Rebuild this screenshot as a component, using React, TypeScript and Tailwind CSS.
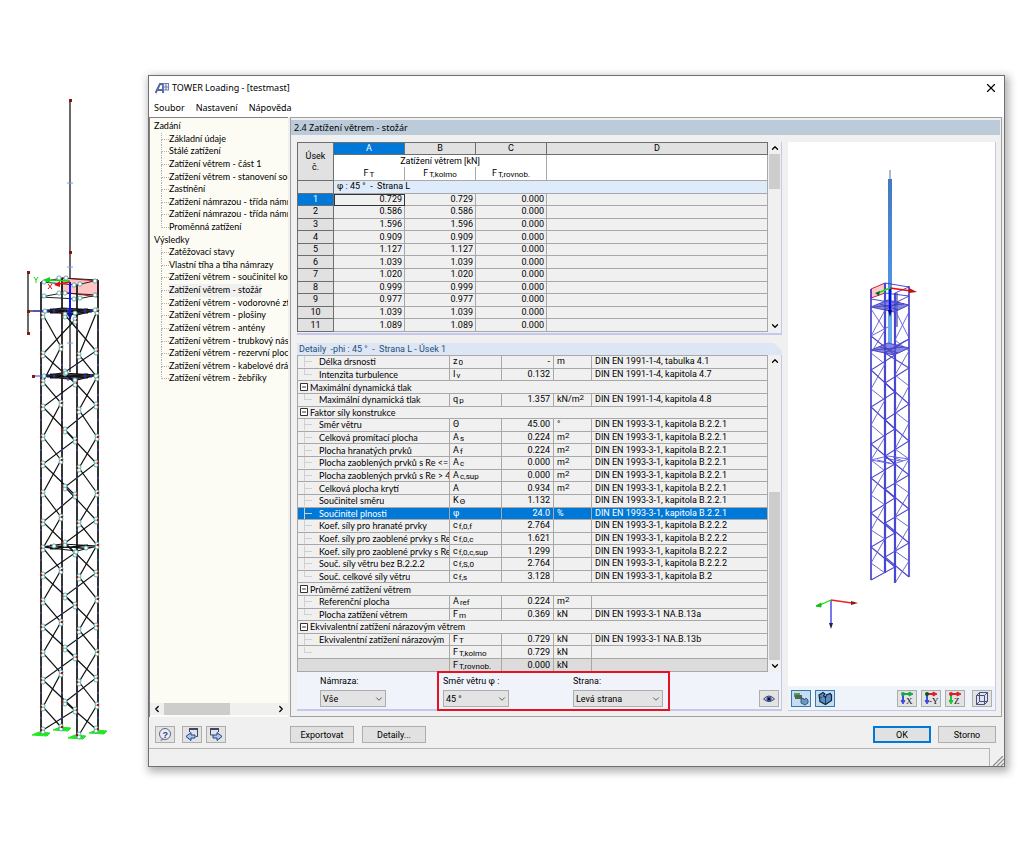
import { clsx } from 'clsx';
import { ChevronDown, ChevronLeft, ChevronRight, ChevronUp, X } from 'lucide-react';
import { ReactNode } from 'react';

type Point = [number, number];

const treeGroups = [
  {
    title: 'Zadání',
    items: [
      'Základní údaje',
      'Stálé zatížení',
      'Zatížení větrem - část 1',
      'Zatížení větrem - stanovení sou',
      'Zastínění',
      'Zatížení námrazou - třída námra',
      'Zatížení námrazou - třída námra',
      'Proměnná zatížení',
    ],
  },
  {
    title: 'Výsledky',
    items: [
      'Zatěžovací stavy',
      'Vlastní tíha a tíha námrazy',
      'Zatížení větrem - součinitel kon',
      'Zatížení větrem - stožár',
      'Zatížení větrem - vodorovné zt',
      'Zatížení větrem - plošiny',
      'Zatížení větrem - antény',
      'Zatížení větrem - trubkový nás',
      'Zatížení větrem - rezervní ploch',
      'Zatížení větrem - kabelové dráh',
      'Zatížení větrem - žebříky',
    ],
  },
];

const forces = [
  '0.729', '0.586', '1.596', '0.909', '1.127', '1.039',
  '1.020', '0.999', '0.977', '1.039', '1.089',
];

interface DetailRow {
  name: string;
  group?: boolean;
  last?: boolean;
  symbol?: string;
  sub?: string;
  value?: string;
  unit?: string;
  sup?: string;
  source?: string;
}

const EN1991 = 'DIN EN 1991-1-4, ';
const EN1993 = 'DIN EN 1993-3-1, kapitola ';

const details: DetailRow[] = [
  { name: 'Délka drsnosti', symbol: 'z', sub: '0', value: '-', unit: 'm', source: EN1991 + 'tabulka 4.1' },
  { name: 'Intenzita turbulence', symbol: 'I', sub: 'v', value: '0.132', source: EN1991 + 'kapitola 4.7', last: true },
  { name: 'Maximální dynamická tlak', group: true },
  { name: 'Maximální dynamická tlak', symbol: 'q', sub: 'p', value: '1.357', unit: 'kN/m', sup: '2', source: EN1991 + 'kapitola 4.8', last: true },
  { name: 'Faktor síly konstrukce', group: true },
  { name: 'Směr větru', symbol: 'Θ', value: '45.00', unit: '°', source: EN1993 + 'B.2.2.1' },
  { name: 'Celková promítací plocha', symbol: 'A', sub: 's', value: '0.224', unit: 'm', sup: '2', source: EN1993 + 'B.2.2.1' },
  { name: 'Plocha hranatých prvků', symbol: 'A', sub: 'f', value: '0.224', unit: 'm', sup: '2', source: EN1993 + 'B.2.2.1' },
  { name: 'Plocha zaoblených prvků s Re <=', symbol: 'A', sub: 'c', value: '0.000', unit: 'm', sup: '2', source: EN1993 + 'B.2.2.1' },
  { name: 'Plocha zaoblených prvků s Re > 4', symbol: 'A', sub: 'c,sup', value: '0.000', unit: 'm', sup: '2', source: EN1993 + 'B.2.2.1' },
  { name: 'Celková plocha krytí', symbol: 'A', value: '0.934', unit: 'm', sup: '2', source: EN1993 + 'B.2.2.1' },
  { name: 'Součinitel směru', symbol: 'K', sub: 'Θ', value: '1.132', source: EN1993 + 'B.2.2.1' },
  { name: 'Součinitel plnosti', symbol: 'φ', value: '24.0', unit: '%', source: EN1993 + 'B.2.2.1' },
  { name: 'Koef. síly pro hranaté prvky', symbol: 'c', sub: 'f,0,f', value: '2.764', source: EN1993 + 'B.2.2.2' },
  { name: 'Koef. síly pro zaoblené prvky s Re', symbol: 'c', sub: 'f,0,c', value: '1.621', source: EN1993 + 'B.2.2.2' },
  { name: 'Koef. síly pro zaoblené prvky s Re', symbol: 'c', sub: 'f,0,c,sup', value: '1.299', source: EN1993 + 'B.2.2.2' },
  { name: 'Souč. síly větru bez B.2.2.2', symbol: 'c', sub: 'f,S,0', value: '2.764', source: EN1993 + 'B.2.2.2' },
  { name: 'Souč. celkové síly větru', symbol: 'c', sub: 'f,s', value: '3.128', source: EN1993 + 'B.2', last: true },
  { name: 'Průměrné zatížení větrem', group: true },
  { name: 'Referenční plocha', symbol: 'A', sub: 'ref', value: '0.224', unit: 'm', sup: '2' },
  { name: 'Plocha zatížení větrem', symbol: 'F', sub: 'm', value: '0.369', unit: 'kN', source: 'DIN EN 1993-3-1 NA.B.13a', last: true },
  { name: 'Ekvivalentní zatížení nárazovým větrem', group: true },
  { name: 'Ekvivalentní zatížení nárazovým', symbol: 'F', sub: 'T', value: '0.729', unit: 'kN', source: 'DIN EN 1993-3-1 NA.B.13b' },
  { name: '', symbol: 'F', sub: 'T,kolmo', value: '0.729', unit: 'kN', last: true },
  { name: '', symbol: 'F', sub: 'T,rovnob.', value: '0.000', unit: 'kN' },
];

const SELECTED = 12;

// Joins the levels of two legs into one bracing line, first leg first
function zigzag(xa: number, a: number[], xb: number, b: number[]): Point[] {
  const points: Point[] = [];
  a.forEach((y, i) => {
    points.push([xa, y]);
    if (i < b.length) points.push([xb, b[i]]);
  });
  return points;
}

const toPath = (points: Point[]) => points.map((p) => p.join(',')).join(' ');

const mastBraces = [
  zigzag(75, [320, 383, 440, 495, 553, 605, 657, 710], 43, [354, 407, 464, 522, 575, 627, 680, 730]),
  zigzag(65, [315, 372, 430, 487, 543, 596, 648, 702], 96, [351, 405, 463, 520, 573, 626, 678, 729]),
  zigzag(43, [315, 382, 437, 493, 548, 601, 653, 707], 61, [347, 403, 460, 517, 570, 622, 673, 727]),
  zigzag(97, [311, 377, 437, 493, 545, 599, 652, 705], 79, [355, 410, 468, 523, 577, 630, 682, 735]),
];

const mastLegs = [
  { x: 41, top: 282, bottom: 733 },
  { x: 62, top: 278, bottom: 728 },
  { x: 77, top: 285, bottom: 736 },
  { x: 98, top: 280, bottom: 731 },
];

const mastJoints: Point[] = [
  [44, 282], [59, 278], [66, 278], [74, 285], [80, 284], [95, 281],
  [44, 296], [59, 293], [65, 293], [74, 299], [80, 298], [95, 295],
  [45, 311], [75, 313], [95, 310], [44, 376], [66, 373], [75, 380],
  [96, 376], [54, 546], [76, 552], [86, 548],
];

function MastDrawing() {
  return (
    <svg
      className="w-[148px] h-[692px] shrink-0"
      viewBox="0 75 148 692"
      role="img"
      aria-label="Model stožáru"
    >
      <path d="M70 99V372" stroke="#444" strokeWidth="1.6" />
      <path d="M28 272V333M28 311H45" stroke="#444" strokeWidth="1.6" />
      <path d="M62 278L98 281V297L62 292Z" fill="#ffc4c4" stroke="#e01010" />
      {mastLegs.map((leg) => (
        <g key={leg.x}>
          <path d={`M${leg.x} ${leg.top}V${leg.bottom}`} stroke="#111" strokeWidth="1.7" />
          <path
            d={`M${leg.x - 9} ${leg.bottom + 2}L${leg.x - 2} ${leg.bottom - 1}L${leg.x + 9} ${leg.bottom}L${leg.x + 6} ${leg.bottom + 3}Z`}
            fill="#22e822"
            stroke="#22e822"
          />
        </g>
      ))}
      <path
        d="M41 282L62 278L98 280L77 285ZM41 297L62 293L98 295L77 299Z"
        fill="none"
        stroke="#222"
      />
      {[311, 376, 547].map((y, i) => (
        <g key={y}>
          <path
            d={`M41 ${y}L62 ${y - 3}L98 ${y - 1}L77 ${y + 4}ZM46 ${y}H94M50 ${y - 2}L88 ${y + 2}M50 ${y + 2}L88 ${y - 2}`}
            fill={i < 2 ? '#445' : 'none'}
            stroke="#111"
            strokeWidth="1.2"
          />
          {i < 2 && (
            <path
              d={`M33 ${y}H44M48 ${y - 2}V${y + 2}M54 ${y - 3}V${y + 2}M68 ${y - 3}V${y + 5}M85 ${y - 3}V${y + 3}M91 ${y - 2}V${y + 2}`}
              stroke="#3838e8"
            />
          )}
        </g>
      ))}
      {mastBraces.map((brace, i) => (
        <polyline key={i} points={toPath(brace)} fill="none" stroke="#111" strokeWidth="1.2" />
      ))}
      {mastLegs.map((leg) =>
        [330, 365, 395, 420, 450, 478, 505, 530, 560, 587, 613, 640, 667, 693, 718].map((y) => (
          <path key={`${leg.x}-${y}`} d={`M${leg.x - 1} ${y}H${leg.x + 1}`} stroke="#5050ff" />
        )),
      )}
      {mastBraces.flat().map(([x, y], i) => (
        <g key={i}>
          <circle cx={x} cy={y - 1} r="2" fill="#fff" stroke="#3c9a9a" strokeWidth="0.8" />
          <circle cx={x} cy={y + 2} r="2" fill="#fff" stroke="#3c9a9a" strokeWidth="0.8" />
          <circle cx={x < 70 ? (x < 50 ? 41 : 62) : x < 85 ? 77 : 98} cy={y} r="1.2" fill="#a01010" />
        </g>
      ))}
      {mastJoints.map(([x, y]) => (
        <circle key={`${x}-${y}`} cx={x} cy={y} r="2.1" fill="#fff" stroke="#3c9a9a" strokeWidth="0.8" />
      ))}
      <path d="M70 282V319" stroke="#1010ff" strokeWidth="2" />
      <path d="M67 313H73L70 320Z" fill="#111188" />
      <path d="M70 281L46 280" stroke="#10d810" strokeWidth="1.6" />
      <path d="M50 277V283L43 280Z" fill="#10d810" />
      <path d="M70 282L58 284" stroke="#e01010" strokeWidth="1.6" />
      <path d="M60 281V287L54 285Z" fill="#e01010" />
      <path d="M34 277L36 280L38 277M36 280V283" fill="none" stroke="#10d810" />
      <path d="M48 284L52 289M52 284L48 289" stroke="#e01010" />
      <path d="M67 183H73M67 267H73M67 343H73" stroke="#6aa0ff" />
      {[[70, 100], [70, 252], [28, 272], [28, 311], [28, 333], [33, 376]].map(([x, y]) => (
        <rect key={`${x}-${y}`} x={x - 1} y={y - 1} width="3" height="3" fill="#8c1414" />
      ))}
    </svg>
  );
}

const towerBraces = [
  zigzag(871, [336, 370, 407, 444, 478, 513, 547, 580], 895, [355, 392, 429, 464, 498, 533, 567]),
  zigzag(909, [339, 368, 404, 441, 475, 509, 543, 577], 885, [353, 383, 420, 456, 489, 523, 557]),
  zigzag(885, [330, 364, 400, 437, 471, 505, 539, 573], 871, [353, 389, 425, 460, 495, 530, 563]),
  zigzag(895, [340, 375, 412, 449, 483, 517, 551, 583], 909, [351, 386, 423, 459, 493, 527, 561]),
];

function TowerView() {
  return (
    <svg
      className="w-full h-[544px] bg-white"
      viewBox="788 142 207 544"
      role="img"
      aria-label="Náhled věže"
    >
      <defs>
        <linearGradient id="pole" x1="0" y1="0" x2="0" y2="1">
          <stop offset="0" stopColor="#4479bd" />
          <stop offset="1" stopColor="#4f95ea" />
        </linearGradient>
      </defs>
      <rect x="889" y="170" width="2" height="10" fill="#a9b9d2" />
      <rect x="888" y="179" width="4" height="114" fill="url(#pole)" />
      <rect x="888" y="293" width="4" height="50" fill="#66aaf0" />
      <path d="M871 289L885 283V293L871 298Z" fill="#ffc8c8" stroke="#d02040" />
      <g fill="none" stroke="#3a36cc">
        <path d="M871 289V580M909 286V577" strokeWidth="1.6" />
        <path d="M885 283V573M895 293V583" strokeWidth="2.2" stroke="#4a46d4" />
        <path d="M885 283L909 287L895 293M871 299L895 303L909 296L885 293" strokeWidth="0.9" />
        <path d="M897 293V327" strokeWidth="1.2" stroke="#44449a" />
      </g>
      {[307, 350].map((y) => (
        <g key={y}>
          <path d={`M871 ${y}L888 ${y - 7}L909 ${y - 2}L894 ${y + 5}Z`} fill="#5c5ce0" fillOpacity="0.75" stroke="#4844c8" />
          <path d={`M874 ${y}L904 ${y - 3}M880 ${y - 3}L898 ${y + 3}M884 ${y + 3}L900 ${y - 5}`} stroke="#33338c" strokeWidth="0.7" />
        </g>
      ))}
      <path
        d="M871 309L885 330M871 336L885 310M871 336L888 327M895 310L909 338M895 340L909 312M895 346L909 339M871 460L888 456L909 459L893 464ZM877 460L890 463M884 458L900 461M893 457L903 461"
        fill="none"
        stroke="#5c58dc"
        strokeWidth="0.9"
      />
      {towerBraces.map((brace, i) => (
        <polyline
          key={i}
          points={toPath(brace)}
          fill="none"
          stroke={i < 2 ? '#4844d0' : '#5c5cc8'}
          strokeWidth={i < 2 ? 1.1 : 0.9}
        />
      ))}
      <path d="M890 288V312" stroke="#0808f0" strokeWidth="2" />
      <path d="M888 310H892L890 317Z" fill="#000080" />
      <path d="M890 288L911 291" stroke="#f00808" strokeWidth="1.6" />
      <path d="M909 288L917 292L909 293Z" fill="#c01010" />
      <path d="M890 288L878 293" stroke="#10e810" strokeWidth="1.8" />
      <path d="M880 291L875 293L879 296Z" fill="#063" />
      <path d="M831 600V624" stroke="#3030e0" strokeWidth="1.3" />
      <path d="M829 623H833L831 629Z" fill="#222244" />
      <path d="M831 600L852 603" stroke="#f02020" strokeWidth="1.3" />
      <path d="M851 601L858 603L851 605Z" fill="#802020" />
      <path d="M831 600L820 605" stroke="#10e010" strokeWidth="1.3" />
      <path d="M821 603L816 606L821 607Z" fill="#10c010" stroke="#10c010" />
    </svg>
  );
}

interface IconButtonProps {
  label: string;
  pressed?: boolean;
  children: ReactNode;
}

function IconButton({ label, pressed, children }: IconButtonProps) {
  return (
    <button
      type="button"
      aria-label={label}
      className={clsx(
        'flex items-center justify-center w-5 h-[17px] border shrink-0',
        pressed ? 'bg-[#c3ddf2] border-[#3a78b0]' : 'bg-[#e3e3e3] border-[#adadad]',
      )}
    >
      {children}
    </button>
  );
}

interface AxisIconProps {
  text: string;
  down: string;
  side: string;
}

function AxisIcon({ text, down, side }: AxisIconProps) {
  return (
    <svg className="w-4 h-[15px]" viewBox="0 0 16 15">
      <path d="M4 3V10" stroke={down} strokeWidth="2" />
      <path d="M2 9.500H6L4 13Z" fill={down} stroke={down} />
      <path d="M4 3H11" stroke={side} strokeWidth="2" />
      <path d="M10 1L14 3L10 5Z" fill={side} stroke={side} />
      <circle cx="4" cy="3" r="2" fill={text === '-Y' ? '#0a5a0a' : side} />
      <text x={text === '-Y' ? 6 : 7} y="13" fontSize="9" fontFamily="Liberation Serif, serif" fill="#111">
        {text}
      </text>
    </svg>
  );
}

function TransferIcon({ flip }: { flip?: boolean }) {
  return (
    <svg className="w-4 h-[15px]" viewBox="0 0 16 15">
      <path
        d={flip ? 'M2.500 8V2.500H10.500V5M2.500 8H5' : 'M5.500 5V2.500H13.500V9.500H12'}
        fill="none"
        stroke="#3c4668"
      />
      <path d={flip ? 'M2 2H11' : 'M5 2H14'} stroke="#3c4668" strokeWidth="2" />
      <path
        d={flip ? 'M5 8H9V5.500L14 9.500L9 13.500V11H5Z' : 'M11 8H7V5.500L2 9.500L7 13.500V11H11Z'}
        fill="#a9c6ee"
        stroke="#27408a"
      />
    </svg>
  );
}

interface SelectBoxProps {
  id: string;
  label: string;
  value: string;
  wide?: boolean;
}

function SelectBox({ id, label, value, wide }: SelectBoxProps) {
  return (
    <div className="flex flex-col gap-[3px]">
      <label htmlFor={id} className="leading-3">
        {label}
      </label>
      <div className={clsx('relative', wide ? 'w-[90px]' : 'w-[66px]')}>
        <select
          id={id}
          defaultValue={value}
          className="block w-full h-[17px] appearance-none border border-[#adadad] bg-[#e3e3e3] pl-[2px] leading-3"
        >
          <option>{value}</option>
        </select>
        <ChevronDown className="absolute right-[2px] top-[4px] size-[10px] text-[#444] pointer-events-none" />
      </div>
    </div>
  );
}

function VerticalScroll({ thumb }: { thumb: string }) {
  return (
    <div className="flex flex-col items-center w-[13px] shrink-0 bg-[#f0f0f0]">
      <ChevronUp className="size-[10px] my-px shrink-0" strokeWidth={3} />
      <div className={clsx('w-[11px] bg-[#cdcdcd]', thumb)} />
      <ChevronDown className="size-[10px] my-px shrink-0" strokeWidth={3} />
    </div>
  );
}

function Sidebar() {
  return (
    <nav className="flex flex-col w-[139px] shrink-0 bg-[#fcfcf4] border-t border-l border-[#828282] overflow-hidden font-['Lato',sans-serif]">
      <div className="flex flex-col h-[267px] pl-1 pt-[2px]">
        {treeGroups.map((group) => (
          <div key={group.title} className={clsx('flex flex-col min-h-0', group.items.length > 8 ? 'grow-[12]' : 'grow-[9]')}>
            <div className="flex-1 leading-3">{group.title}</div>
            {group.items.map((item, i) => (
              <div key={i} className="flex flex-1 leading-3 whitespace-nowrap">
                <span className="flex flex-col w-2 ml-[7px] shrink-0">
                  <span className="h-[7px] border-l border-b border-dotted border-[#b0b0b0]" />
                  {i < group.items.length - 1 && <span className="flex-1 border-l border-dotted border-[#b0b0b0]" />}
                </span>
                <a href="#" className={clsx(item.endsWith('stožár') && 'bg-[#f0f0f0]')}>
                  {item}
                </a>
              </div>
            ))}
          </div>
        ))}
      </div>
      <div className="flex items-center mt-auto mb-[2px] h-3 bg-[#f0f0f0]">
        <ChevronLeft className="size-[10px] mx-[2px] shrink-0" strokeWidth={3} />
        <div className="w-[66px] h-3 bg-[#cdcdcd]" />
        <ChevronRight className="size-[10px] ml-auto mr-[2px] shrink-0" strokeWidth={3} />
      </div>
    </nav>
  );
}

function Sub({ children }: { children: ReactNode }) {
  return <span className="relative top-px ml-px text-[8px] leading-none">{children}</span>;
}

function ForceTable() {
  const cell = 'border-r border-b border-[#a8a8a8] p-0 font-normal';
  const headBase = 'border-r border-b border-[#6e6e6e] p-0 font-normal';
  const head = clsx(headBase, 'bg-[#e1e1e1]');
  const active = clsx(headBase, 'bg-[#0078d7] text-white');
  return (
    <div className="flex border-b-2 border-r border-[#c5c8ee] pb-px">
      <div className="flex-1 min-w-0">
        <table className="w-full h-[190px] table-fixed border-separate border-spacing-0 border-t border-l border-[#6e6e6e] leading-[11px]">
          <colgroup>
            <col className="w-9" />
            <col className="w-[71px]" />
            <col className="w-[71px]" />
            <col className="w-[71px]" />
            <col />
          </colgroup>
          <thead>
            <tr className="h-[11px]">
              <th rowSpan={3} className={head}>
                Úsek
                <br />
                č.
              </th>
              <th className={active}>A</th>
              <th className={head}>B</th>
              <th className={head}>C</th>
              <th className={head}>D</th>
            </tr>
            <tr className="h-3 bg-white">
              <th colSpan={3} className="border-r border-[#a8a8a8] p-0 font-normal">
                Zatížení větrem [kN]
              </th>
              <th className="border-r border-[#a8a8a8] p-0" />
            </tr>
            <tr className="h-[14px] bg-white">
              <th className={cell}>
                F<Sub>T</Sub>
              </th>
              <th className={cell}>
                F<Sub>T,kolmo</Sub>
              </th>
              <th className={cell}>
                F<Sub>T,rovnob.</Sub>
              </th>
              <th className={cell} />
            </tr>
          </thead>
          <tbody>
            <tr className="h-3">
              <th className={head} />
              <td colSpan={4} className={clsx(cell, 'bg-[#deebfa] pl-[3px] whitespace-pre')}>
                φ : 45 °  -  Strana L
              </td>
            </tr>
            {forces.map((force, i) => (
              <tr key={i} className="h-3 text-right">
                <th scope="row" className={clsx(i === 0 ? active : head, 'text-center')}>
                  {i + 1}
                </th>
                <td className={clsx(cell, 'pr-[2px]', i === 0 && 'outline outline-1 -outline-offset-1 outline-[#333]')}>
                  {force}
                </td>
                <td className={clsx(cell, 'pr-[2px]')}>{force}</td>
                <td className={clsx(cell, 'pr-[2px]')}>0.000</td>
                <td className={cell} />
              </tr>
            ))}
          </tbody>
        </table>
      </div>
      <VerticalScroll thumb="h-[35px] mb-auto" />
    </div>
  );
}

function DetailTable() {
  const cell = 'border-r border-b border-[#a8a8a8] p-0';
  return (
    <div className="flex border-r border-[#c5c8ee]">
      <div className="flex-1 min-w-0">
        <table className="w-full h-[317px] table-fixed border-separate border-spacing-0 border-t border-l border-[#a8a8a8] leading-[11px]">
          <colgroup>
            <col className="w-[152px]" />
            <col className="w-[52px]" />
            <col className="w-[52px]" />
            <col className="w-[38px]" />
            <col />
          </colgroup>
          <tbody>
            {details.map((row, i) =>
              row.group ? (
                <tr key={i} className="h-3">
                  <th colSpan={5} className={clsx(cell, 'text-left font-normal')}>
                    <span className="flex items-center gap-[2px] h-[11px] pl-[2px] font-['Lato',sans-serif]">
                      <svg className="size-2" viewBox="0 0 8 8">
                        <path d="M0.500 0.500H7.500V7.500H0.500ZM2 4H6" fill="#fff" stroke="#333" />
                      </svg>
                      {row.name}
                    </span>
                  </th>
                </tr>
              ) : (
                <tr
                  key={i}
                  className={clsx(
                    'h-3',
                    i === SELECTED && 'bg-[#0078d7] text-white',
                    i === details.length - 1 && 'bg-[#dcdcdc]',
                  )}
                >
                  <td className={cell}>
                    <span className="flex h-[11px] pl-[6px] font-['Lato',sans-serif]">
                      <span className="flex flex-col w-[15px] shrink-0">
                        {i < details.length - 1 && <span className="h-[6px] w-2 border-l border-b border-[#d0d0d0]" />}
                        {!row.last && i < details.length - 1 && <span className="flex-1 border-l border-[#d0d0d0]" />}
                      </span>
                      <span className="overflow-hidden whitespace-nowrap">{row.name}</span>
                    </span>
                  </td>
                  <td className={clsx(cell, 'pl-[3px] whitespace-nowrap')}>
                    {row.symbol}
                    {row.sub && <Sub>{row.sub}</Sub>}
                  </td>
                  <td className={clsx(cell, 'pr-[3px] text-right')}>{row.value}</td>
                  <td className={clsx(cell, 'pl-[3px] whitespace-nowrap')}>
                    {row.unit}
                    {row.sup && <span className="relative -top-[2px] text-[8px] leading-none">{row.sup}</span>}
                  </td>
                  <td className={clsx(cell, 'pl-[3px] whitespace-nowrap')}>{row.source}</td>
                </tr>
              ),
            )}
          </tbody>
        </table>
      </div>
      <VerticalScroll thumb="h-[168px] mt-auto" />
    </div>
  );
}

function ViewToolbar() {
  return (
    <div className="flex items-center gap-1 h-6 px-[3px] bg-[#eff4fa]">
      <IconButton label="Zobrazit model" pressed>
        <svg className="w-4 h-[15px]" viewBox="0 0 16 15">
          <rect x="1" y="2" width="6" height="4" fill="#5c9c4c" />
          <rect x="2" y="4" width="7" height="4" fill="#4a6a58" />
          <path d="M8 8L10 7L11 9L13 7L15 9V12L12 14L8 12Z" fill="#6c98c8" stroke="#23405c" strokeWidth="0.8" />
        </svg>
      </IconButton>
      <IconButton label="Zobrazit plochy" pressed>
        <svg className="w-4 h-[15px]" viewBox="0 0 16 15">
          <path d="M2 4L6 1.500L8 3L6.500 5L8.500 6.500L9.500 4L13 2.500L14.500 4V9.500L8.500 13.500L3 10.500Z" fill="#5c8cc0" stroke="#102840" strokeWidth="1.2" />
          <path d="M8.500 7V13M3 6L5 7" stroke="#102840" strokeWidth="0.8" />
        </svg>
      </IconButton>
      <div className="flex gap-1 ml-auto">
        <IconButton label="Pohled X">
          <AxisIcon text="X" down="#3c50e0" side="#18a848" />
        </IconButton>
        <IconButton label="Pohled -Y">
          <AxisIcon text="-Y" down="#3c50e0" side="#d82030" />
        </IconButton>
        <IconButton label="Pohled Z">
          <AxisIcon text="Z" down="#18c838" side="#d82030" />
        </IconButton>
      </div>
      <div className="ml-[3px]">
        <IconButton label="Izometrie">
          <svg className="w-4 h-[15px]" viewBox="0 0 16 15">
            <path
              d="M2.500 4.500L5.500 1.500H13.500V10.500L10.500 13.500H2.500ZM2.500 4.500H10.500V13.500M10.500 4.500L13.500 1.500M5.500 1.500V10.500H13.500M5.500 10.500L2.500 13.500"
              fill="#dfe3f4"
              stroke="#4a5078"
            />
          </svg>
        </IconButton>
      </div>
    </div>
  );
}

function Filters() {
  return (
    <div className="relative flex items-start h-[39px] pl-[23px] pr-[2px] pt-[3px] bg-[#f0f4fa] border-b-2 border-r border-[#c5c8ee]">
      <SelectBox id="icing" label="Námraza:" value="Vše" />
      <div className="ml-[57px]">
        <SelectBox id="direction" label="Směr větru φ :" value="45 °" />
      </div>
      <div className="ml-16">
        <SelectBox id="side" label="Strana:" value="Levá strana" wide />
      </div>
      <div className="ml-auto mt-[15px]">
        <IconButton label="Zobrazit">
          <svg className="w-3 h-2" viewBox="0 0 12 8">
            <path d="M0.500 4Q6 -2 11.500 4Q6 9 0.500 4Z" fill="#c8ccd8" stroke="#445" />
            <circle cx="6" cy="4" r="2.600" fill="#2c4cb0" />
            <circle cx="6" cy="4" r="1.100" fill="#001" />
          </svg>
        </IconButton>
      </div>
      {/* highlighted selection */}
      <div className="absolute left-[140px] -top-px w-[233px] h-10 border-2 border-[#e81123] pointer-events-none" />
    </div>
  );
}

function ActionButton({ primary, children }: { primary?: boolean; children: ReactNode }) {
  return (
    <button
      type="button"
      className={clsx(
        'h-[17px] bg-[#e1e1e1] leading-3 min-w-[58px]',
        primary ? 'border-2 border-[#0078d7]' : 'border border-[#adadad]',
      )}
    >
      {children}
    </button>
  );
}

export default function App() {
  return (
    <div className="flex items-start pt-[75px] pb-[78px] pr-[19px] bg-white min-h-screen text-black font-['Roboto',sans-serif] text-[9px]">
      <MastDrawing />
      <div className="flex flex-col flex-1 min-w-0 bg-[#f0f0f0] border border-[#707070] shadow-[2px_3px_8px_2px_rgba(0,0,0,0.3)]">
        <div className="flex items-center h-[23px] pl-[6px] pr-[6px] bg-white">
          <svg className="w-[14px] h-3 mr-[3px]" viewBox="0 0 14 12">
            <path d="M0.500 11L5 2H8V11M3 8H7" fill="none" stroke="#56689c" strokeWidth="2" />
            <path d="M8.500 1.500H13.500V8H8.500ZM11 1V8M8 5H14" fill="none" stroke="#6c7cc0" strokeWidth="1.200" />
          </svg>
          <h1 className="font-['Noto_Sans',sans-serif]">TOWER Loading - [testmast]</h1>
          <button type="button" aria-label="Zavřít" className="ml-auto">
            <X className="size-[14px]" strokeWidth={2} />
          </button>
        </div>
        <div className="flex items-center gap-[11px] h-[18px] pl-[5px] bg-white font-['Noto_Sans',sans-serif]">
          <button type="button">Soubor</button>
          <button type="button">Nastavení</button>
          <button type="button">Nápověda</button>
        </div>

        <div className="flex h-[600px]">
          <Sidebar />
          <main className="flex flex-col flex-1 min-w-0 ml-[2px] mr-[2px] pt-[2px] border border-[#a0a0a0] bg-[#f0f0f0]">
            <h2 className="h-[15px] pl-[3px] mr-px bg-[#bccbd9] font-['Noto_Sans',sans-serif] leading-[15px]">
              2.4 Zatížení větrem - stožár
            </h2>
            <div className="flex gap-[6px] pl-[6px] pr-[5px] pt-[7px]">
              <div className="flex flex-col flex-1 min-w-0">
                <ForceTable />
                <div className="h-3 mt-[8px] pl-[2px] bg-[#dce6f4] text-[#1f4e79] leading-3 whitespace-pre [clip-path:polygon(0_0,calc(100%-8px)_0,100%_8px,100%_100%,0_100%)]">
                  Detaily  -phi : 45 °  -  Strana L - Úsek 1
                </div>
                <DetailTable />
                <Filters />
              </div>
              <div className="flex flex-col w-[208px] shrink-0 border-r border-b border-[#c5c8ee]">
                <TowerView />
                <ViewToolbar />
              </div>
            </div>
          </main>
        </div>

        <footer className="flex flex-col">
          <div className="flex items-center h-[31px] pl-[6px] pr-2 pt-1">
            <IconButton label="Nápověda">
              <svg className="w-4 h-[15px]" viewBox="0 0 16 15">
                <circle cx="8" cy="7" r="5.500" fill="#e8ecf8" stroke="#667" />
                <path d="M5 11L3 14L8 12.500Z" fill="#889" />
                <text x="5.500" y="10.500" fontSize="9" fontWeight="bold" fontFamily="Liberation Sans, sans-serif" fill="#2a3c80">
                  ?
                </text>
              </svg>
            </IconButton>
            <div className="flex gap-1 ml-[7px]">
              <IconButton label="Předchozí">
                <TransferIcon />
              </IconButton>
              <IconButton label="Další">
                <TransferIcon flip />
              </IconButton>
            </div>
            <div className="grid grid-cols-2 gap-2 w-[136px] ml-16">
              <ActionButton>Exportovat</ActionButton>
              <ActionButton>Detaily...</ActionButton>
            </div>
            <div className="flex gap-[7px] ml-auto">
              <ActionButton primary>OK</ActionButton>
              <ActionButton>Storno</ActionButton>
            </div>
          </div>
          <div className="flex items-end h-[18px]">
            <div className="flex-1 h-full border-t border-r border-[#b4b4b4]" role="status" />
            <svg className="w-[13px] h-[10px] ml-px" viewBox="0 0 13 10">
              <path d="M2 10L12 0M6 10L13 3M10 10L13 7" stroke="#8c8c8c" strokeWidth="1.200" />
            </svg>
          </div>
        </footer>
      </div>
    </div>
  );
}
